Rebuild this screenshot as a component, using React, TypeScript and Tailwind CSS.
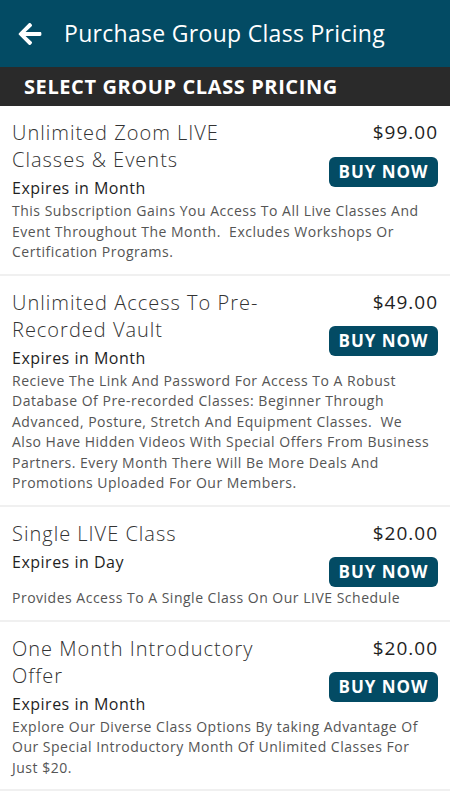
import React from "react";
import { FaArrowLeft } from "react-icons/fa";

type Item = {
  title: string[];
  price: string;
  expires: string;
  desc: string[];
};

const items: Item[] = [
  {
    title: ["Unlimited Zoom LIVE", "Classes & Events"],
    price: "$99.00",
    expires: "Expires in Month",
    desc: [
      "This Subscription Gains You Access To All Live Classes And",
      "Event Throughout The Month.\u00a0 Excludes Workshops Or",
      "Certification Programs.",
    ],
  },
  {
    title: ["Unlimited Access To Pre-", "Recorded Vault"],
    price: "$49.00",
    expires: "Expires in Month",
    desc: [
      "Recieve The Link And Password For Access To A Robust",
      "Database Of Pre-recorded Classes: Beginner Through",
      "Advanced, Posture, Stretch And Equipment Classes.\u00a0 We",
      "Also Have Hidden Videos With Special Offers From Business",
      "Partners. Every Month There Will Be More Deals And",
      "Promotions Uploaded For Our Members.",
    ],
  },
  {
    title: ["Single LIVE Class"],
    price: "$20.00",
    expires: "Expires in Day",
    desc: ["Provides Access To A Single Class On Our LIVE Schedule"],
  },
  {
    title: ["One Month Introductory", "Offer"],
    price: "$20.00",
    expires: "Expires in Month",
    desc: [
      "Explore Our Diverse Class Options By taking Advantage Of",
      "Our Special Introductory Month Of Unlimited Classes For",
      "Just $20.",
    ],
  },
];

function PriceRow({ item }: { item: Item }) {
  return (
    <div className="border-b-2 border-[#f0f0f0] pt-[13px] pb-[11px] pl-[12px] pr-[12px]">
      <div className="flex justify-between items-start">
        <div className="flex-1 min-w-0">
          <div className="text-[20px] leading-[27px] font-light tracking-[1px] text-[#333333]">
            {item.title.map((t, i) => (
              <div key={i} className="whitespace-nowrap">{t}</div>
            ))}
          </div>
          <div className="mt-[3px] text-[16px] leading-[24px] font-medium tracking-[0.5px] text-[#1f1f1f]">
            {item.expires}
          </div>
        </div>
        <div className="flex flex-col items-end shrink-0">
          <div className="text-[19px] leading-[27px] font-medium tracking-[1px] text-[#1f1f1f]">{item.price}</div>
          <button className="mt-[10.5px] h-[30px] w-[109px] rounded-[6px] bg-[#034b64] text-white text-[17px] font-bold tracking-[1px] flex items-center justify-center">
            BUY NOW
          </button>
        </div>
      </div>
      <div className="mt-[1px] text-[14px] leading-[20.5px] tracking-[0.5px] text-[#555555]">
        {item.desc.map((d, i) => (
          <div key={i} className="whitespace-nowrap">{d}</div>
        ))}
      </div>
    </div>
  );
}

export default function App() {
  return (
    <div className="w-[450px] min-h-[800px] bg-white" style={{ fontFamily: "'Open Sans', 'Liberation Sans', sans-serif" }}>
      <div className="h-[67px] bg-[#034b64] flex items-center">
        <div className="pl-[17px] w-[64px] text-white">
          <FaArrowLeft size={26} />
        </div>
        <div className="text-white text-[23px] font-medium tracking-[0.3px]">Purchase Group Class Pricing</div>
      </div>
      <div className="h-[39px] bg-[#2a2a2a] flex items-center pl-[24px]">
        <div className="text-white text-[20px] font-bold tracking-[0.6px]">SELECT GROUP CLASS PRICING</div>
      </div>
      {items.map((it, i) => (
        <PriceRow key={i} item={it} />
      ))}
    </div>
  );
}
